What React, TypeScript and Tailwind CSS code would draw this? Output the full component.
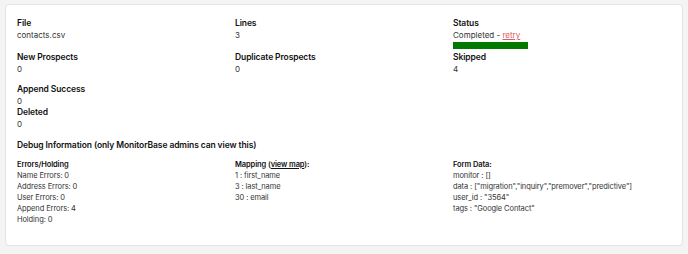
const font = { fontFamily: 'Inter, "Liberation Sans", sans-serif' };

function Field({ label, children }: { label: string; children: React.ReactNode }) {
  return (
    <div>
      <div className="text-[8.5px] leading-[11px] font-semibold tracking-[-0.1px] text-[#111]">{label}</div>
      <div className="text-[8px] leading-[12px] text-[#333]">{children}</div>
    </div>
  );
}

function DebugList({ title, lines }: { title: React.ReactNode; lines: string[] }) {
  return (
    <div className="text-[7.5px] leading-[11px] tracking-[-0.1px] text-[#333]">
      <div className="font-semibold text-[#111]">{title}</div>
      {lines.map((l, i) => (
        <div key={i}>{l}</div>
      ))}
    </div>
  );
}

export default function App() {
  return (
    <div className="h-[254px] w-[688px] bg-[#f4f4f5] pt-[4px] px-[5px]" style={font}>
      <div className="h-[242px] rounded-[4px] border border-[#e4e4e7] bg-white px-[11px] pt-[13px]">
        <div className="grid grid-cols-3">
          <Field label="File">contacts.csv</Field>
          <Field label="Lines">3</Field>
          <div>
            <Field label="Status">
              Completed - <span className="text-[#e05a5a] underline">retry</span>
            </Field>
            <div className="mt-[1px] h-[7px] w-[75px] bg-[#027a02]" />
          </div>
        </div>
        <div className="mt-[3px] grid grid-cols-3">
          <Field label="New Prospects">0</Field>
          <Field label="Duplicate Prospects">0</Field>
          <Field label="Skipped">4</Field>
        </div>
        <div className="mt-[9px]">
          <Field label="Append Success">0</Field>
          <Field label="Deleted">0</Field>
        </div>
        <div className="mt-[10px] text-[8.5px] leading-[11px] font-semibold tracking-[-0.1px] text-[#111]">
          Debug Information (only MonitorBase admins can view this)
        </div>
        <div className="mt-[8px] grid grid-cols-3">
          <DebugList
            title="Errors/Holding"
            lines={['Name Errors: 0', 'Address Errors: 0', 'User Errors: 0', 'Append Errors: 4', 'Holding: 0']}
          />
          <DebugList
            title={
              <>
                Mapping (<span className="underline">view map</span>):
              </>
            }
            lines={['1 : first_name', '3 : last_name', '30 : email']}
          />
          <DebugList
            title="Form Data:"
            lines={[
              'monitor : []',
              'data : ["migration","inquiry","premover","predictive"]',
              'user_id : "3564"',
              'tags : "Google Contact"',
            ]}
          />
        </div>
      </div>
    </div>
  );
}
